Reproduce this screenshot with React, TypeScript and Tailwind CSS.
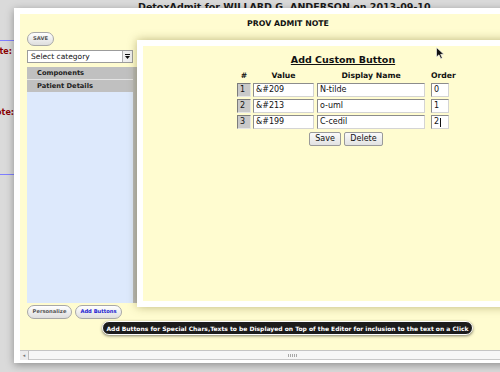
import React from 'react';

interface CustomRow {
  n: number;
  value: string;
  name: string;
  order: string;
}

const rows: CustomRow[] = [
  { n: 1, value: '&#209', name: 'N-tilde', order: '0' },
  { n: 2, value: '&#213', name: 'o-uml', order: '1' },
  { n: 3, value: '&#199', name: 'C-cedil', order: '2' },
];

const pill =
  'flex h-[14px] items-center justify-center rounded-full border border-[#a8a8a8] bg-linear-to-b from-white to-[#dedede] font-bold text-[5.2px]';

const field =
  'flex h-[14px] items-center border border-t-[#8c8c8c] border-l-[#8c8c8c] border-b-[#d4d4d4] border-r-[#d4d4d4] bg-white pl-[2px] text-[8px] text-[#111]';

const CustomButtonPopup: React.FC = () => (
  <div className="absolute left-[137px] top-[40px] h-[267px] w-[412px] bg-white p-[6px] shadow-[0_0_9px_rgba(90,80,0,0.4)]">
    <div className="flex h-full flex-col items-center bg-[#fffcd0] pt-[8px]">
      <h3 className="h-[12px] text-[9.5px] font-bold leading-[12px] text-[#111] underline">Add Custom Button</h3>
      <div className="mt-[5px] flex h-[9px] text-[7.7px] font-bold leading-[9px] text-[#111]">
        <span className="w-[14px] text-center">#</span>
        <span className="ml-[2px] w-[61px] text-center">Value</span>
        <span className="ml-[3px] w-[108px] text-center">Display Name</span>
        <span className="ml-[6px] w-[18px] text-center">Order</span>
      </div>
      <div className="mt-[3px] flex flex-col gap-[2px]">
        {rows.map((row) => (
          <div key={row.n} className="flex">
            <div className="flex h-[14px] w-[14px] items-center border border-t-[#7c7c7c] border-l-[#7c7c7c] border-b-[#e6e6e6] border-r-[#e6e6e6] bg-[#c9c9c9] pl-[2px] text-[8px] text-[#111]">
              {row.n}
            </div>
            <div className={`ml-[2px] w-[61px] ${field}`}>{row.value}</div>
            <div className={`ml-[3px] w-[108px] ${field}`}>{row.name}</div>
            <div className={`ml-[6px] w-[18px] ${field}`}>
              {row.order}
              {row.n === 3 && <span className="ml-px h-[9px] w-px bg-[#111]" />}
            </div>
          </div>
        ))}
      </div>
      <div className="mt-[3px] ml-[6px] flex gap-[3px]">
        <button className="h-[14px] w-[32px] rounded-[2px] border border-[#9a9a9a] bg-linear-to-b from-[#fafafa] to-[#e2e2e2] text-[8px] leading-[12px] text-[#111]">
          Save
        </button>
        <button className="h-[14px] w-[39px] rounded-[2px] border border-[#9a9a9a] bg-linear-to-b from-[#fafafa] to-[#e2e2e2] text-[8px] leading-[12px] text-[#111]">
          Delete
        </button>
      </div>
    </div>
  </div>
);

const AdmitNoteDialog: React.FC = () => (
  <div className="absolute left-[14px] top-[8px] flex h-[355px] w-[548px] flex-col bg-white p-[6px] pb-[3px] shadow-[0_2px_8px_rgba(0,0,0,0.35)]">
    <div className="flex h-[336px] flex-col bg-[#fffcd0]">
      <div className="h-[18px] pt-[5px] text-center text-[7.8px] font-bold leading-[10px] text-[#111]">
        PROV ADMIT NOTE
      </div>
      <div className="flex flex-col items-start pl-[7px]">
        <button className={`w-[27px] text-[#555] ${pill}`}>SAVE</button>
        <div className="mt-[4px] flex h-[13px] w-[106px] border border-[#9c9c9c] bg-white">
          <span className="flex-1 pl-[3px] text-[7.5px] leading-[11px] text-[#111]">Select category</span>
          <span className="flex w-[10px] items-center justify-center border-l border-[#b0b0b0] bg-[#f0f0f0]">
            <svg width="5" height="5" viewBox="0 0 5 5">
              <rect x="0" y="0" width="5" height="1" fill="#111" />
              <path d="M0 2 L5 2 L2.5 5 Z" fill="#111" />
            </svg>
          </span>
        </div>
        <div className="mt-[4px] flex h-[236px] w-[114px]">
          <div className="flex w-[106px] flex-col bg-[#dde9fc]">
            <div className="h-[12px] bg-[#c0c0c0] pl-[10px] text-[6.7px] font-bold leading-[12px] text-[#222]">
              Components
            </div>
            <div className="h-px bg-[#e4e4e4]" />
            <div className="h-[12px] bg-[#c0c0c0] pl-[10px] text-[6.7px] font-bold leading-[12px] text-[#222]">
              Patient Details
            </div>
          </div>
          <div className="w-[8px] bg-[#b8b8b8]" />
        </div>
        <div className="mt-[2px] flex gap-[3px]">
          <button className={`w-[45px] text-[#555] ${pill}`}>Personalize</button>
          <button className={`w-[47px] text-[#1a1ad0] ${pill}`}>Add Buttons</button>
        </div>
      </div>
    </div>
    <div className="flex h-[10px] border-t border-[#c4c4c4] bg-[#f6f6f6]">
      <div className="flex w-[9px] items-center justify-center border-r border-[#bdbdbd] bg-[#ececec] text-[5px] text-[#777]">
        ◂
      </div>
      <div className="flex flex-1 items-center justify-center border-b border-[#c8c8c8]">
        <div className="flex gap-px">
          {[0, 1, 2, 3, 4].map((i) => (
            <span key={i} className="h-[3px] w-px bg-[#a8a8a8]" />
          ))}
        </div>
      </div>
    </div>
  </div>
);

export default function App() {
  return (
    <div className="relative h-[372px] w-[500px] overflow-hidden bg-[#dadada] font-['DejaVu_Sans',Verdana,sans-serif]">
      <div className="whitespace-nowrap pl-[138px] pt-[1px] text-[9.5px] font-bold leading-[12px] text-[#1a1a1a]">
        DetoxAdmit for WILLARD G. ANDERSON on 2013-09-10
      </div>
      <div className="mt-[27px] w-[14px] border-t border-[#7f7fff]" />
      <div className="mt-[6px] flex h-[10px] w-[12px] justify-end whitespace-nowrap text-[8px] font-bold leading-[10px] text-[#8b0000]">
        Date:
      </div>
      <div className="mt-[51px] flex h-[10px] w-[14px] justify-end whitespace-nowrap text-[8px] font-bold leading-[10px] text-[#8b0000]">
        Note:
      </div>
      <div className="mt-[56px] w-[14px] border-t border-[#7f7fff]" />

      <AdmitNoteDialog />
      <CustomButtonPopup />

      <div className="absolute left-[102px] top-[321px] flex h-[14px] w-[371px] items-center justify-center rounded-full border border-white bg-[#1c1c1c] shadow-[0_1px_3px_rgba(0,0,0,0.5)]">
        <span className="whitespace-nowrap text-[6px] font-bold text-white">
          Add Buttons for Special Chars,Texts to be Displayed on Top of the Editor for inclusion to the text on a Click
        </span>
      </div>

      <svg className="absolute left-[436px] top-[47px]" width="9" height="13" viewBox="0 0 9 13">
        <path d="M0.5 0.5 L0.5 10 L3 7.8 L4.8 11.8 L6.3 11.1 L4.6 7.3 L7.8 7.3 Z" fill="#111" stroke="#fff" strokeWidth="0.6" />
      </svg>
    </div>
  );
}
